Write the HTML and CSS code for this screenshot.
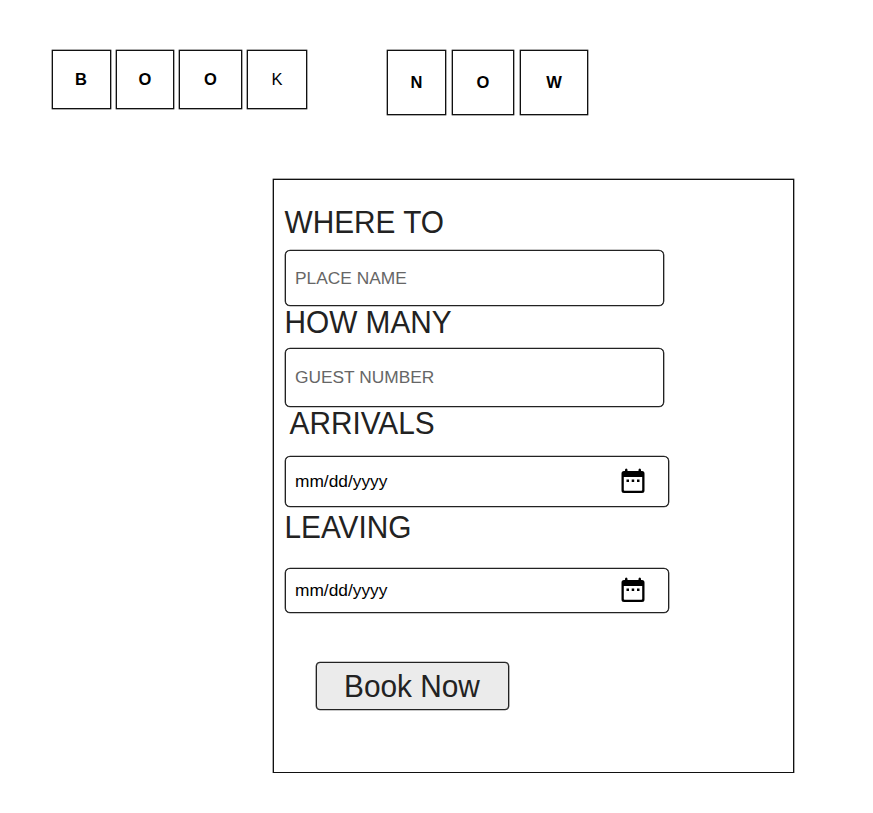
FILE: index.html
```html
<!DOCTYPE html>
<html lang="en">
<head>
<meta charset="utf-8">
<title>Book Now</title>
<link rel="stylesheet" href="styles.css">
</head>
<body>
<header class="banner">
  <div class="word word-book">
    <span class="tile tile-b">B</span><span class="tile tile-o1">O</span><span class="tile tile-o2">O</span><span class="tile tile-k">K</span>
  </div>
  <div class="word word-now">
    <span class="tile tile-n">N</span><span class="tile tile-o3">O</span><span class="tile tile-w">W</span>
  </div>
</header>
<form class="card">
  <label class="label" for="place">WHERE TO</label>
  <input class="field place" id="place" type="text" placeholder="PLACE NAME">
  <label class="label" for="guests">HOW MANY</label>
  <input class="field guests" id="guests" type="text" placeholder="GUEST NUMBER">
  <label class="label indented">ARRIVALS</label>
  <div class="field date arrivals"><span>mm/dd/yyyy</span>
    <svg class="calendar" viewBox="0 0 24 26"><path fill-rule="evenodd" d="M4 2q0-1.500 1.250-1.500T6.500 2v1h11V2q0-1.500 1.250-1.500T20 2v1h1q2.500 0 2.500 2.500v17q0 2.500-2.500 2.500H3Q.5 25 .5 22.500v-17Q.5 3 3 3h1zM2.800 9v13q0 .8.8.8h16.800q.8 0 .8-.8V9z"/><path d="M5.500 11.500H8V14H5.500zm5.200 0h2.500V14h-2.500zm5.300 0h2.500V14H16z"/></svg>
  </div>
  <label class="label">LEAVING</label>
  <div class="field date leaving"><span>mm/dd/yyyy</span>
    <svg class="calendar" viewBox="0 0 24 26"><path fill-rule="evenodd" d="M4 2q0-1.500 1.250-1.500T6.500 2v1h11V2q0-1.500 1.250-1.500T20 2v1h1q2.500 0 2.500 2.500v17q0 2.500-2.500 2.500H3Q.5 25 .5 22.500v-17Q.5 3 3 3h1zM2.800 9v13q0 .8.8.8h16.800q.8 0 .8-.8V9z"/><path d="M5.500 11.500H8V14H5.500zm5.200 0h2.500V14h-2.500zm5.300 0h2.500V14H16z"/></svg>
  </div>
  <button class="submit" type="button"><span class="submit-text">Book Now</span></button>
</form>
</body>
</html>
```
FILE: styles.css
```css
* { box-sizing: border-box; }
body {
  margin: 0;
  background: #fff;
  color: #000;
  font-family: "Liberation Sans", Arial, sans-serif;
}
.banner {
  display: flex;
  align-items: flex-start;
  gap: 80px;
  height: 179px;
  padding: 50px 0 0 52px;
}
.word { display: flex; gap: 5px; }
.word-now { gap: 6px; }
.tile {
  display: flex;
  align-items: center;
  justify-content: center;
  width: 59px;
  height: 59px;
  border: 1px solid #111;
  box-shadow: 0 0 0 0.35px #111;
  font-size: 16.5px;
  font-weight: bold;
}
.tile-b { padding-right: 1px; }
.tile-o1 { width: 58px; }
.tile-o2 { width: 63px; }
.tile-k { width: 60px; font-weight: normal; }
.word-now .tile { height: 65px; }
.tile-o3 { width: 62px; }
.word-now .tile-w { width: 68px; }
.card {
  display: flex;
  flex-direction: column;
  align-items: flex-start;
  width: 521px;
  height: 594px;
  margin-left: 273px;
  padding: 24px 0 0 11px;
  border: 1px solid #111;
  box-shadow: 0 0 0 0.35px #111;
}
.label {
  height: 36px;
  color: #222;
  font-size: 31.5px;
  line-height: 36px;
  white-space: nowrap;
  transform: translateX(-0.5px) scaleX(0.946);
  transform-origin: left;
}
.indented { margin: -1px 0 1px 5px; }
.field {
  width: 379px;
  margin: 0;
  padding: 0 9px;
  border: 1px solid #222;
  border-radius: 5px;
  background: #fff;
  box-shadow: 0 0 0 0.35px #222;
  color: #000;
  font: 17.33px "Liberation Sans", Arial, sans-serif;
}
.field::placeholder { color: #666; opacity: 1; }
.place { height: 56px; margin: 10px 0 -2px; }
.guests { height: 59px; margin: 8px 0 -1px; }
.date {
  display: flex;
  align-items: center;
  justify-content: space-between;
  width: 384px;
  padding-right: 23px;
}
.arrivals { height: 51px; margin: 14px 0 2px; }
.leaving { height: 45px; margin-top: 23px; }
.calendar { width: 24px; height: 26px; margin-bottom: 2px; }
.submit {
  width: 193px;
  height: 48px;
  margin: 49px 0 0 31px;
  padding: 0;
  border: 1px solid #222;
  border-radius: 4px;
  background: #ebebeb;
  box-shadow: 0 0 0 0.35px #222;
  color: #222;
  font: 31.5px "Liberation Sans", Arial, sans-serif;
}
.submit-text {
  display: block;
  transform: translate(-0.5px, -0.5px) scaleX(0.946);
}
```
